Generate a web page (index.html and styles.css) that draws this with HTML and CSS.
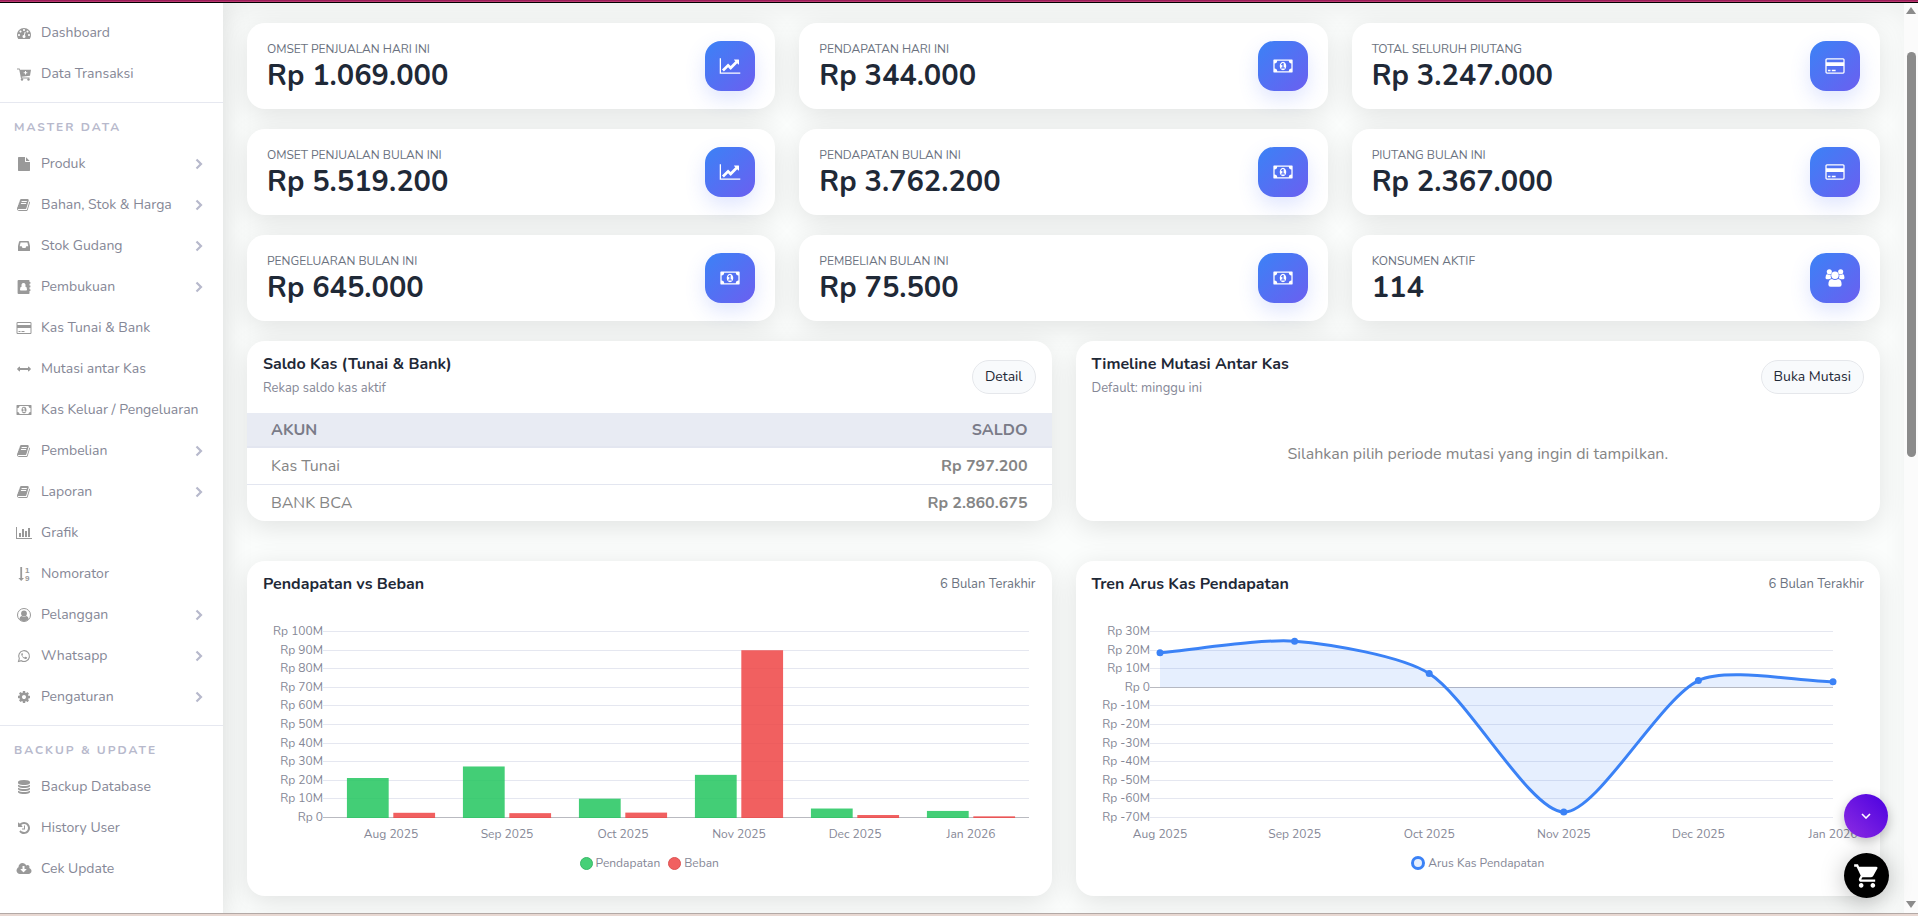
FILE: index.html
```html
<!DOCTYPE html>
<html lang="id">
<head>
<meta charset="utf-8">
<title>Dashboard</title>
<link rel="stylesheet" href="styles.css">
</head>
<body>
<svg class="sprite" aria-hidden="true">
  <symbol id="i-dash" viewBox="0 0 1792 1792"><path d="M384 1152q0-53-37.500-90.500t-90.500-37.500-90.500 37.500-37.500 90.500 37.500 90.500 90.500 37.500 90.500-37.500 37.500-90.500zm192-448q0-53-37.500-90.500t-90.500-37.500-90.500 37.500-37.500 90.500 37.500 90.500 90.500 37.500 90.500-37.500 37.500-90.500zm428 481l101-382q6-26-7.500-48.500t-38.500-29.500-48 6.500-30 39.500l-101 382q-60 5-107 43.500t-63 98.500q-20 77 20 146t117 89 146-20 89-117q16-60-6-117t-72-91zm660-33q0-53-37.500-90.500t-90.500-37.500-90.500 37.500-37.500 90.500 37.500 90.500 90.500 37.500 90.500-37.500 37.500-90.500zm-640-640q0-53-37.500-90.500t-90.500-37.500-90.500 37.500-37.500 90.500 37.500 90.500 90.500 37.500 90.500-37.500 37.500-90.500zm448 192q0-53-37.500-90.500t-90.500-37.500-90.500 37.500-37.500 90.500 37.500 90.500 90.500 37.500 90.500-37.500 37.500-90.500zm320 448q0 261-141 483-19 29-54 29h-1402q-35 0-54-29-141-221-141-483 0-182 71-348t191-286 286-191 348-71 348 71 286 191 191 286 71 348z"/></symbol>
  <symbol id="i-cartplus" viewBox="0 0 14 14"><path fill-rule="evenodd" d="M0 1.500h2.600l.5 1.200H14L13 8.800 4.700 9.700l.2.900H12.500v1H4L2.200 2.600H0zM8 3.900v1.300H6.700v1H8v1.300h1V6.200h1.300v-1H9V3.900z"/><circle cx="5" cy="12.500" r="1.200"/><circle cx="11.500" cy="12.500" r="1.200"/></symbol>
  <symbol id="i-file" viewBox="0 0 1792 1792"><path d="M1152 512v-472q22 14 36 28l408 408q14 14 28 36h-472zm-128 32q0 40 28 68t68 28h544v1056q0 40-28 68t-68 28h-1344q-40 0-68-28t-28-68v-1600q0-40 28-68t68-28h800v544z"/></symbol>
  <symbol id="i-book" viewBox="0 0 1792 1792"><path d="M1639 478q40 57 18 129l-275 906q-19 64-76.500 107.500t-122.500 43.500h-923q-77 0-148.500-53.500t-99.500-131.500q-24-67-2-127 0-4 3-27t4-37q1-8-3-21.500t-3-19.500q2-11 8-21t16.500-23.500 16.500-23.500q23-38 45-91.500t30-91.500q3-10 .5-30t-.5-28q3-11 17-28t17-23q21-36 42-92t25-90q1-9-2.500-32t.5-28q4-13 22-30.500t22-22.500q19-26 42.500-84.500t27.500-96.500q1-8-3-25.500t-2-26.500q2-8 9-18t18-23 17-21q8-12 16.500-30.500t15-35 16-36 19.500-32 26.500-23.500 36-11.500 47.500 5.500l-1 3q38-9 51-9h761q74 0 114 56t18 130l-274 906q-36 119-71.500 153.500t-128.500 34.500h-869q-27 0-38 15-11 16-1 43 24 70 144 70h923q29 0 56-15.500t35-41.500l300-987q7-22 5-57 38 15 59 43zm-1064 2q-4 13 2 22.500t20 9.500h608q13 0 25.500-9.500t16.500-22.500l21-64q4-13-2-22.500t-20-9.500h-608q-13 0-25.500 9.500t-16.500 22.500zm-83 256q-4 13 2 22.500t20 9.500h608q13 0 25.500-9.500t16.500-22.500l21-64q4-13-2-22.500t-20-9.500h-608q-13 0-25.500 9.500t-16.500 22.500z"/></symbol>
  <symbol id="i-inbox" viewBox="0 0 14 14"><path fill-rule="evenodd" d="M3 2h8q.6 0 .9.600L13 7v4.400q0 .6-.6.600H1.600Q1 12 1 11.400V7l1.100-4.400Q2.400 2 3 2zM3.600 3.500L2.700 7.300H4.700L5.500 9h3l.8-1.700h2l-.9-3.800z"/></symbol>
  <symbol id="i-contact" viewBox="0 0 14 14"><path fill-rule="evenodd" d="M1.500 0h10.200q.8 0 .8.800V2h.9v1.800h-.9v1.700h.9v1.800h-.9v1.900h.9V11h-.9v2.200q0 .8-.8.800H1.500q-.9 0-.9-.9V.9Q.6 0 1.500 0zM6.500 3a2 2 0 0 0-1.600 3.300Q3 6.800 3 9.600q0 .9.800.9h5.400q.8 0 .8-.9 0-2.800-1.900-3.300A2 2 0 0 0 6.500 3z"/></symbol>
  <symbol id="i-card" viewBox="0 0 1920 1792"><path d="M1760 128q66 0 113 47t47 113v1216q0 66-47 113t-113 47h-1600q-66 0-113-47t-47-113v-1216q0-66 47-113t113-47h1600zm-1600 128q-13 0-22.500 9.500t-9.500 22.500v224h1664v-224q0-13-9.500-22.500t-22.500-9.500h-1600zm1600 1280q13 0 22.500-9.500t9.500-22.500v-608h-1664v608q0 13 9.500 22.500t22.500 9.500h1600zm-1504-128v-128h256v128h-256zm384 0v-128h384v128h-384z"/></symbol>
  <symbol id="i-arrows" viewBox="0 0 1792 1792"><path d="M1792 896q0 26-19 45l-256 256q-19 19-45 19t-45-19-19-45v-128h-1024v128q0 26-19 45t-45 19-45-19l-256-256q-19-19-19-45t19-45l256-256q19-19 45-19t45 19 19 45v128h1024v-128q0-26 19-45t45-19 45 19l256 256q19 19 19 45z"/></symbol>
  <symbol id="i-money" viewBox="-64 0 1920 1792"><path d="M704 1152h384v-96h-128v-448h-114l-148 137 77 80q42-37 55-57h2v288h-128v96zm512-256q0 70-21 142t-59.500 134-101.500 101-138 39-138-39-101.500-101-59.500-134-21-142 21-142 59.500-134 101.500-101 138-39 138 39 101.500 101 59.500 134 21 142zm512 256v-512q-106 0-181-75t-75-181h-1152q0 106-75 181t-181 75v512q106 0 181 75t75 181h1152q0-106 75-181t181-75zm128-832v1152q0 26-19 45t-45 19h-1792q-26 0-45-19t-19-45v-1152q0-26 19-45t45-19h1792q26 0 45 19t19 45z"/></symbol>
  <symbol id="i-bars" viewBox="0 0 2048 1792"><path d="M640 896v512h-256v-512h256zm384-512v1024h-256v-1024h256zm1024 1152v128h-2048v-1536h128v1408h1920zm-640-896v768h-256v-768h256zm384-384v1152h-256v-1152h256z"/></symbol>
  <symbol id="i-user" viewBox="0 0 14 14"><circle cx="7" cy="7" r="6.500" fill="none" stroke="currentColor"/><circle cx="7" cy="5.500" r="2.900"/><path d="M2.300 11.300Q2.600 8.600 4.600 8.100q2.400 1.600 4.800 0 2 .5 2.300 3.200Q9.800 13.300 7 13.300t-4.700-2z"/></symbol>
  <symbol id="i-wa" viewBox="0 0 14 14"><path fill="none" stroke="currentColor" stroke-width="1.100" d="M1.500 12.500l.8-2.900a5.400 5.400 0 1 1 2 2.100z"/><path d="M5 4q-1.200.8-.6 2.200 1.200 2.900 4 3.800 1.500.1 1.800-1.200 0-.4-1.700-1.100-.3-.1-.6.400-.4.600-.7.400Q5.800 7.900 5.300 6.700q.8-.8.600-1.200L5.400 4.100Q5.300 3.800 5 4z"/></symbol>
  <symbol id="i-cog" viewBox="0 0 1792 1792"><path d="M1152 896q0-106-75-181t-181-75-181 75-75 181 75 181 181 75 181-75 75-181zm512-109v222q0 12-8 23t-20 13l-185 28q-19 54-39 91 35 50 107 138 10 12 10 25t-9 23q-27 37-99 108t-94 71q-12 0-26-9l-138-108q-44 23-91 38-16 136-29 186-7 28-36 28h-222q-14 0-24.500-8.500t-11.500-21.500l-28-184q-49-16-90-37l-141 107q-10 9-25 9-14 0-25-11-126-114-165-168-7-10-7-23 0-12 8-23 15-21 51-66.500t54-70.500q-27-50-41-99l-183-27q-13-2-21-12.500t-8-23.500v-222q0-12 8-23t19-13l186-28q14-46 39-92-40-57-107-138-10-12-10-24 0-10 9-23 26-36 98.500-107.500t94.500-71.500q13 0 26 10l138 107q44-23 91-38 16-136 29-186 7-28 36-28h222q14 0 24.500 8.500t11.500 21.500l28 184q49 16 90 37l142-107q9-9 24-9 13 0 25 10 129 119 165 170 7 8 7 22 0 12-8 23-15 21-51 66.500t-54 70.500q26 50 41 98l183 28q13 2 21 12.500t8 23.500z"/></symbol>
  <symbol id="i-db" viewBox="0 0 1792 1792"><path d="M896 768q237 0 443-43t325-127v170q0 69-103 128t-280 93.500-385 34.500-385-34.500-280-93.500-103-128v-170q119 84 325 127t443 43zm0 768q237 0 443-43t325-127v170q0 69-103 128t-280 93.500-385 34.500-385-34.500-280-93.500-103-128v-170q119 84 325 127t443 43zm0-384q237 0 443-43t325-127v170q0 69-103 128t-280 93.500-385 34.500-385-34.500-280-93.500-103-128v-170q119 84 325 127t443 43zm0-1152q208 0 385 34.500t280 93.500 103 128v128q0 69-103 128t-280 93.500-385 34.500-385-34.500-280-93.500-103-128v-128q0-69 103-128t280-93.500 385-34.500z"/></symbol>
  <symbol id="i-history" viewBox="0 0 1792 1792"><path d="M1664 896q0 156-61 298t-164 245-245 164-298 61q-172 0-327-72.500t-264-204.500q-7-10-6.500-22.500t8.500-20.500l137-138q10-9 25-9 16 2 23 12 73 95 179 147t225 52q104 0 198.500-40.500t163.500-109.500 109.500-163.500 40.500-198.500-40.500-198.500-109.500-163.500-163.500-109.500-198.500-40.500q-98 0-188 35.500t-160 101.500l137 138q31 30 14 69-17 40-59 40h-448q-26 0-45-19t-19-45v-448q0-42 40-59 39-17 69 14l130 129q107-101 244.500-156.500t284.500-55.500q156 0 298 61t245 164 164 245 61 298zm-640-288v448q0 14-9 23t-23 9h-320q-14 0-23-9t-9-23v-64q0-14 9-23t23-9h224v-352q0-14 9-23t23-9h64q14 0 23 9t9 23z"/></symbol>
  <symbol id="i-cloud" viewBox="-64 0 1920 1792"><path d="M1216 928q0-14-9-23t-23-9h-224v-352q0-13-9.500-22.500t-22.500-9.500h-192q-13 0-22.500 9.500t-9.500 22.500v352h-224q-13 0-22.500 9.500t-9.500 22.500q0 14 9 23l352 352q9 9 23 9t23-9l351-351q10-12 10-24zm640 224q0 159-112.500 271.500t-271.500 112.500h-1088q-185 0-316.500-131.500t-131.500-316.500q0-130 70-240t188-165q-2-30-2-43 0-212 150-362t362-150q156 0 285.500 87t188.500 231q71-62 166-62 106 0 181 75t75 181q0 76-41 138 130 31 213.500 135.500t83.500 238.500z"/></symbol>
  <symbol id="i-line" viewBox="0 0 2048 1792"><path d="M2048 1536v128h-2048v-1536h128v1408h1920zm-128-1248v435q0 21-19.500 29.500t-35.500-7.500l-121-121-633 633q-10 10-23 10t-23-10l-233-233-416 416-192-192 585-585q10-10 23-10t23 10l233 233 464-464-121-121q-16-16-7.500-35.500t29.500-19.500h435q14 0 23 9t9 23z"/></symbol>
  <symbol id="i-users" viewBox="0 0 20 19"><circle cx="4" cy="2.900" r="2.700"/><circle cx="16" cy="2.900" r="2.700"/><path d="M5.500 6Q3.300 6.400 1.500 5.200 0 6.300 0 9.300q0 1.600 1.600 1.600h2.200q.8-1 2.300-1.200Q5 8 5.500 6zM14.500 6q2.200.4 4-.8 1.500 1.100 1.500 4.100 0 1.600-1.600 1.600h-2.200q-.8-1-2.300-1.200Q15 8 14.500 6z"/><circle cx="10" cy="6.600" r="3.900"/><path d="M6.800 10.500Q10 12.500 13.200 10.500q3.800.3 3.800 5.800 0 2.400-2.300 2.400H5.300Q3 18.700 3 16.300q0-5.500 3.800-5.800z"/></symbol>
  <symbol id="i-chev" viewBox="0 0 8 12"><path fill="none" stroke="currentColor" stroke-width="2.200" d="M1.500 1.500L6 6l-4.500 4.500"/></symbol>
  <symbol id="i-down" viewBox="0 0 10 6"><path fill="none" stroke="currentColor" stroke-width="1.600" d="M1 1l4 4 4-4"/></symbol>
  <symbol id="i-cart" viewBox="0 0 24 24"><path d="M7 18c-1.100 0-1.990.9-1.990 2S5.900 22 7 22s2-.9 2-2-.9-2-2-2zM1 2v2h2l3.600 7.590-1.350 2.450c-.16.280-.25.610-.25.960 0 1.100.9 2 2 2h12v-2H7.420c-.14 0-.25-.11-.25-.25l.03-.12.900-1.630h7.450c.75 0 1.410-.41 1.750-1.030l3.580-6.490A1 1 0 0 0 20.010 4H5.210l-.94-2H1zm16 16c-1.100 0-1.990.9-1.990 2s.89 2 1.990 2 2-.9 2-2-.9-2-2-2z"/></symbol>
</svg>

<div class="topline"></div>
<div class="app">
  <nav class="sidebar" aria-label="Menu utama">
    <ul class="menu">
      <li><a href="#"><svg class="ico"><use href="#i-dash"/></svg>Dashboard</a></li>
      <li><a href="#"><svg class="ico"><use href="#i-cartplus"/></svg>Data Transaksi</a></li>
    </ul>
    <h2 class="menu-title">MASTER DATA</h2>
    <ul class="menu">
      <li><a href="#"><svg class="ico"><use href="#i-file"/></svg>Produk<svg class="chev"><use href="#i-chev"/></svg></a></li>
      <li><a href="#"><svg class="ico"><use href="#i-book"/></svg>Bahan, Stok &amp; Harga<svg class="chev"><use href="#i-chev"/></svg></a></li>
      <li><a href="#"><svg class="ico"><use href="#i-inbox"/></svg>Stok Gudang<svg class="chev"><use href="#i-chev"/></svg></a></li>
      <li><a href="#"><svg class="ico"><use href="#i-contact"/></svg>Pembukuan<svg class="chev"><use href="#i-chev"/></svg></a></li>
      <li><a href="#"><svg class="ico"><use href="#i-card"/></svg>Kas Tunai &amp; Bank</a></li>
      <li><a href="#"><svg class="ico"><use href="#i-arrows"/></svg>Mutasi antar Kas</a></li>
      <li><a href="#"><svg class="ico"><use href="#i-money"/></svg>Kas Keluar / Pengeluaran</a></li>
      <li><a href="#"><svg class="ico"><use href="#i-book"/></svg>Pembelian<svg class="chev"><use href="#i-chev"/></svg></a></li>
      <li><a href="#"><svg class="ico"><use href="#i-book"/></svg>Laporan<svg class="chev"><use href="#i-chev"/></svg></a></li>
      <li><a href="#"><svg class="ico"><use href="#i-bars"/></svg>Grafik</a></li>
      <li><a href="#"><svg class="ico sort" viewBox="-3 -1 20 16"><path d="M3.300 0h1.800v11H7l-2.800 3L1.400 11h1.900z"/><text x="8" y="6">1</text><text x="8" y="14">9</text></svg>Nomorator</a></li>
      <li><a href="#"><svg class="ico"><use href="#i-user"/></svg>Pelanggan<svg class="chev"><use href="#i-chev"/></svg></a></li>
      <li><a href="#"><svg class="ico"><use href="#i-wa"/></svg>Whatsapp<svg class="chev"><use href="#i-chev"/></svg></a></li>
      <li><a href="#"><svg class="ico"><use href="#i-cog"/></svg>Pengaturan<svg class="chev"><use href="#i-chev"/></svg></a></li>
    </ul>
    <h2 class="menu-title">BACKUP &amp; UPDATE</h2>
    <ul class="menu">
      <li><a href="#"><svg class="ico"><use href="#i-db"/></svg>Backup Database</a></li>
      <li><a href="#"><svg class="ico"><use href="#i-history"/></svg>History User</a></li>
      <li><a href="#"><svg class="ico"><use href="#i-cloud"/></svg>Cek Update</a></li>
    </ul>
  </nav>

  <main class="content">
    <section class="stats">
      <article class="card stat"><div><p class="stat-label">OMSET PENJUALAN HARI INI</p><p class="stat-value">Rp 1.069.000</p></div><span class="badge"><svg><use href="#i-line"/></svg></span></article>
      <article class="card stat"><div><p class="stat-label">PENDAPATAN HARI INI</p><p class="stat-value">Rp 344.000</p></div><span class="badge"><svg><use href="#i-money"/></svg></span></article>
      <article class="card stat"><div><p class="stat-label">TOTAL SELURUH PIUTANG</p><p class="stat-value">Rp 3.247.000</p></div><span class="badge"><svg><use href="#i-card"/></svg></span></article>
      <article class="card stat"><div><p class="stat-label">OMSET PENJUALAN BULAN INI</p><p class="stat-value">Rp 5.519.200</p></div><span class="badge"><svg><use href="#i-line"/></svg></span></article>
      <article class="card stat"><div><p class="stat-label">PENDAPATAN BULAN INI</p><p class="stat-value">Rp 3.762.200</p></div><span class="badge"><svg><use href="#i-money"/></svg></span></article>
      <article class="card stat"><div><p class="stat-label">PIUTANG BULAN INI</p><p class="stat-value">Rp 2.367.000</p></div><span class="badge"><svg><use href="#i-card"/></svg></span></article>
      <article class="card stat"><div><p class="stat-label">PENGELUARAN BULAN INI</p><p class="stat-value">Rp 645.000</p></div><span class="badge"><svg><use href="#i-money"/></svg></span></article>
      <article class="card stat"><div><p class="stat-label">PEMBELIAN BULAN INI</p><p class="stat-value">Rp 75.500</p></div><span class="badge"><svg><use href="#i-money"/></svg></span></article>
      <article class="card stat"><div><p class="stat-label">KONSUMEN AKTIF</p><p class="stat-value">114</p></div><span class="badge"><svg><use href="#i-users"/></svg></span></article>
    </section>

    <section class="pair">
      <article class="card panel">
        <header class="panel-head tall">
          <div><h3>Saldo Kas (Tunai &amp; Bank)</h3><p class="sub">Rekap saldo kas aktif</p></div>
          <a class="pill" href="#">Detail</a>
        </header>
        <table class="saldo">
          <thead><tr><th>AKUN</th><th>SALDO</th></tr></thead>
          <tbody>
            <tr><td>Kas Tunai</td><td>Rp 797.200</td></tr>
            <tr><td>BANK BCA</td><td>Rp 2.860.675</td></tr>
          </tbody>
        </table>
      </article>
      <article class="card panel">
        <header class="panel-head tall">
          <div><h3>Timeline Mutasi Antar Kas</h3><p class="sub">Default: minggu ini</p></div>
          <a class="pill" href="#">Buka Mutasi</a>
        </header>
        <p class="empty">Silahkan pilih periode mutasi yang ingin di tampilkan.</p>
      </article>
    </section>

    <section class="pair">
      <article class="card panel">
        <header class="panel-head"><h3>Pendapatan vs Beban</h3><span class="range">6 Bulan Terakhir</span></header>
        <div class="chart"><svg id="bar-chart" role="img" aria-label="Pendapatan vs Beban"></svg></div>
        <ul class="legend"><li><i class="dot green"></i>Pendapatan</li><li><i class="dot red"></i>Beban</li></ul>
      </article>
      <article class="card panel">
        <header class="panel-head"><h3>Tren Arus Kas Pendapatan</h3><span class="range">6 Bulan Terakhir</span></header>
        <div class="chart"><svg id="line-chart" role="img" aria-label="Tren Arus Kas Pendapatan"></svg></div>
        <ul class="legend"><li><i class="dot ring"></i>Arus Kas Pendapatan</li></ul>
      </article>
    </section>
  </main>

  <div class="scroll" aria-hidden="true"><i class="up"></i><i class="thumb"></i><i class="down"></i></div>
</div>
<div class="baseline"></div>
<div class="floating">
  <button class="fab purple" type="button" aria-label="Gulir ke bawah"><svg><use href="#i-down"/></svg></button>
  <button class="fab black" type="button" aria-label="Keranjang"><svg><use href="#i-cart"/></svg></button>
</div>
<script src="charts.js"></script>
</body>
</html>
```
FILE: styles.css
```css
* { box-sizing: border-box; }
html, body { height: 100%; }
body {
  margin: 0;
  display: flex;
  flex-direction: column;
  overflow: hidden;
  font-family: Nunito, Lato, "Open Sans", sans-serif;
  font-size: 16px;
  line-height: 1.5;
  color: #858585;
  background: #fbfdfc;
}
h2, h3, p, ul { margin: 0; padding: 0; }
ul { list-style: none; }
a { color: inherit; text-decoration: none; }
svg { fill: currentColor; }
.sprite { position: absolute; width: 0; height: 0; }

.topline { flex: none; height: 3px; background: linear-gradient(#9c1c58 0 1px, #b8386f 1px 2px, #000 2px 3px); position: relative; z-index: 3; }
.baseline { flex: none; height: 3px; background: linear-gradient(#b3a9a6 0 1px, #e8d8d2 1px 3px); position: relative; z-index: 3; }
.app { flex: 1; min-height: 0; display: flex; overflow: hidden; }

.sidebar { flex: none; width: 223px; background: #fff; padding-top: 9px; box-shadow: 0 0 30px rgba(0, 0, 0, .1); }
.menu a { display: flex; align-items: center; height: 41px; padding: 0 20px 0 14px; font-size: 14px; color: #858796; }
.ico { flex: none; width: 20px; height: 14px; margin-right: 7px; color: #999; }
.ico.sort { height: 16px; font: bold 8px "Liberation Sans", sans-serif; }
.chev { width: 8px; height: 12px; margin-left: auto; color: #b7b9cc; }
.menu-title { margin-top: 8px; padding: 12px 14px 4px; border-top: 1px solid #e6e8f0; font-size: 12px; line-height: 24px; font-weight: 700; letter-spacing: 2px; color: #b7b9cc; }

.content { flex: 1; min-width: 0; display: flex; flex-direction: column; padding: 20px 24px; overflow: hidden; box-shadow: inset 0 12px 24px rgba(0, 0, 0, .05); }
.card { background: #fff; border-radius: 18px; box-shadow: 0 6px 28px rgba(0, 0, 0, .11); }
.stats { display: grid; grid-template-columns: repeat(3, 1fr); gap: 20px 24px; }
.stat { display: flex; justify-content: space-between; align-items: flex-start; padding: 18px 20px; height: 86px; }
.stat-label { font-size: 12px; line-height: 17px; color: #6b7280; }
.stat-value { font-size: 29px; line-height: 36px; font-weight: 700; color: #1f2937; }
.badge { display: grid; place-items: center; width: 50px; height: 50px; border-radius: 16px; color: #fff; background: linear-gradient(135deg, #3b82f6, #6b5ff0); box-shadow: 0 8px 20px rgba(79, 110, 247, .18); }
.badge svg { width: 22px; height: 18px; }

.pair { display: grid; grid-template-columns: 1fr 1fr; gap: 24px; margin-top: 20px; }
.pair + .pair { margin-top: 40px; }
.panel { overflow: hidden; }
.panel-head { display: flex; justify-content: space-between; align-items: center; padding: 11px 16px 0; }
.panel-head.tall { height: 72px; padding: 0 16px; }
.tall div { padding-bottom: 2px; }
h3 { font-size: 16px; line-height: 24px; font-weight: 700; color: #1f2937; }
.sub { font-size: 13px; line-height: 24px; color: #858796; }
.range { font-size: 13px; line-height: 22px; color: #6b7280; }
.pill { padding: 0 12px; border: 1px solid #e5e7eb; border-radius: 17px; background: #f8fafc; font-size: 14px; line-height: 32px; color: #1f2937; }
.saldo { width: 100%; border-collapse: collapse; }
.saldo th, .saldo td { padding: 0 24px; height: 37px; text-align: left; font-size: 16px; line-height: 24px; }
.saldo th { height: 34px; background: #e8ebf3; color: #7a7b88; border-bottom: 2px solid #e3e6f0; }
.saldo tr + tr td { border-top: 1px solid #e3e6f0; }
.saldo th:last-child, .saldo td:last-child { text-align: right; }
.saldo td:last-child { font-weight: 700; }
.empty { padding-top: 29px; text-align: center; }

.chart { height: 246px; padding: 0 16px; }
.chart svg { display: block; width: 100%; height: 246px; overflow: visible; }
.chart text { font-size: 12px; fill: #858796; }
.end { text-anchor: end; }
.mid { text-anchor: middle; }
.legend { display: flex; justify-content: center; gap: 8px; height: 54px; padding-top: 12px; font-size: 12px; line-height: 18px; color: #858796; }
.legend li { display: flex; align-items: center; height: 18px; gap: 3px; }
.dot { width: 13px; height: 13px; border-radius: 50%; border: 1px solid #39b868; background: #46d077; }
.dot.red { background: #f16060; border-color: #dc5454; }
.dot.ring { width: 14px; height: 14px; border: 3px solid #3b82f6; background: #e6effe; }

.scroll { flex: none; width: 14px; display: flex; flex-direction: column; align-items: center; padding: 4px 0 5px; background: #fbfbfb; }
.up, .down { border: 5px solid transparent; }
.up { border-top: 0; border-bottom: 7px solid #8b8b8b; }
.down { border-bottom: 0; border-top: 7px solid #8b8b8b; margin-top: auto; }
.thumb { width: 9px; height: 45%; margin-top: 38px; border-radius: 5px; background: #8b8b8b; }

.floating { position: fixed; right: 29px; bottom: 18px; z-index: 4; display: grid; gap: 15px; }
.fab { display: grid; place-items: center; width: 45px; height: 45px; padding: 0; border: 0; border-radius: 50%; color: #fff; }
.fab.purple { width: 44px; height: 44px; background: linear-gradient(45deg, #8e2de2, #4a00e0); box-shadow: 0 4px 12px rgba(0, 0, 0, .25); }
.fab.purple svg { width: 10px; height: 6px; }
.fab.black { background: #000; box-shadow: 0 4px 24px rgba(0, 0, 0, .25); }
.fab.black svg { width: 28px; height: 28px; }
```
FILE: charts.js
```js
const months = ["Aug 2025", "Sep 2025", "Oct 2025", "Nov 2025", "Dec 2025", "Jan 2026"];
const TOP = 35, STEP = 186 / 10, TICK = 10, MONTH_Y = 242;

function frame(width, left, right, labels, zeroIndex) {
  let out = "";
  labels.forEach((label, i) => {
    const y = Math.round(TOP + i * STEP) + 0.5;
    out += `<line x1="${left - TICK}" x2="${width - right}" y1="${y}" y2="${y}" stroke="${i === zeroIndex ? "#b9bac0" : "#e5e7f0"}"/>`;
    out += `<text class="end" x="${left - TICK}" y="${y + 3}">${label}</text>`;
  });
  return out;
}

function drawBars() {
  const svg = document.getElementById("bar-chart");
  const width = svg.clientWidth, left = 70, right = 7;
  const income = [21.5, 27.7, 10.4, 23.2, 5.1, 3.8];
  const cost = [2.8, 2.6, 2.9, 90.2, 1.6, 0.9];
  const labels = Array.from({ length: 11 }, (_, i) => i === 10 ? "Rp 0" : `Rp ${100 - i * 10}M`);
  const slot = (width - left - right) / 6, bar = slot * 0.36, gap = slot * 0.02;
  const base = TOP + 10 * STEP + 1;
  let out = frame(width, left, right, labels, 10);
  months.forEach((month, i) => {
    const mid = left + slot * (i + 0.5);
    [[income[i], mid - gap - bar, "#22c55e"], [cost[i], mid + gap, "#ef4444"]].forEach(([value, x, color]) => {
      const h = value * STEP / 10;
      out += `<rect x="${x}" y="${base - h}" width="${bar}" height="${h}" fill="${color}" fill-opacity=".85"/>`;
    });
    out += `<text class="mid" x="${mid}" y="${MONTH_Y}">${month}</text>`;
  });
  svg.innerHTML = out;
}

function drawLine() {
  const svg = document.getElementById("line-chart");
  const width = svg.clientWidth, left = 68, right = 32, tension = 0.25;
  const values = [18.6, 24.8, 7.4, -67.1, 3.6, 3];
  const labels = Array.from({ length: 11 }, (_, i) => i === 3 ? "Rp 0" : `Rp ${30 - i * 10}M`);
  const zero = TOP + 3 * STEP + 0.5;
  const pts = values.map((v, i) => [left + (width - left - right) * i / 5, zero - v * STEP / 10]);
  const ctrl = pts.map((p, i) => {
    const a = pts[Math.max(i - 1, 0)], b = pts[Math.min(i + 1, 5)];
    const da = Math.hypot(p[0] - a[0], p[1] - a[1]), db = Math.hypot(b[0] - p[0], b[1] - p[1]);
    const fa = tension * da / (da + db), fb = tension * db / (da + db);
    return { before: [p[0] - fa * (b[0] - a[0]), p[1] - fa * (b[1] - a[1])], after: [p[0] + fb * (b[0] - a[0]), p[1] + fb * (b[1] - a[1])] };
  });
  let d = `M${pts[0]}`;
  for (let i = 1; i < 6; i++) d += `C${ctrl[i - 1].after} ${ctrl[i].before} ${pts[i]}`;
  let out = frame(width, left, right, labels, 3);
  out += `<path d="${d}L${pts[5][0]} ${zero}H${left}Z" fill="#3b82f6" fill-opacity=".13"/>`;
  out += `<path d="${d}" fill="none" stroke="#3b82f6" stroke-width="3"/>`;
  pts.forEach((p, i) => {
    out += `<circle cx="${p[0]}" cy="${p[1]}" r="3.500" fill="#3b82f6"/>`;
    out += `<text class="mid" x="${p[0]}" y="${MONTH_Y}">${months[i]}</text>`;
  });
  svg.innerHTML = out;
}

function draw() { drawBars(); drawLine(); }
draw();
window.addEventListener("resize", draw);
```
